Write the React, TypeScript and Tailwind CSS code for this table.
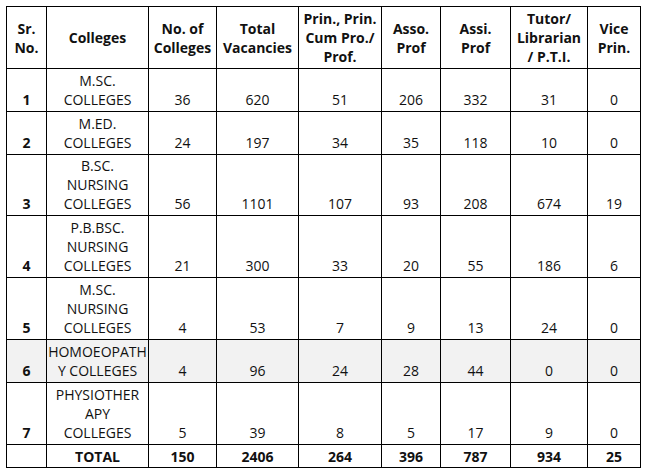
import React from "react";

const widths = [40, 102, 68, 82, 83, 59, 70, 77, 53];

const header: string[][] = [
  ["Sr.", "No."],
  ["Colleges"],
  ["No. of", "Colleges"],
  ["Total", "Vacancies"],
  ["Prin., Prin.", "Cum Pro./", "Prof."],
  ["Asso.", "Prof"],
  ["Assi.", "Prof"],
  ["Tutor/", "Librarian", "/ P.T.I."],
  ["Vice", "Prin."],
];

type Row = { sr: string; name: string[]; vals: string[]; h: number; gray?: boolean };

const rows: Row[] = [
  { sr: "1", name: ["M.SC.", "COLLEGES"], vals: ["36", "620", "51", "206", "332", "31", "0"], h: 43 },
  { sr: "2", name: ["M.ED.", "COLLEGES"], vals: ["24", "197", "34", "35", "118", "10", "0"], h: 43 },
  { sr: "3", name: ["B.SC.", "NURSING", "COLLEGES"], vals: ["56", "1101", "107", "93", "208", "674", "19"], h: 61 },
  { sr: "4", name: ["P.B.BSC.", "NURSING", "COLLEGES"], vals: ["21", "300", "33", "20", "55", "186", "6"], h: 62 },
  { sr: "5", name: ["M.SC.", "NURSING", "COLLEGES"], vals: ["4", "53", "7", "9", "13", "24", "0"], h: 62 },
  { sr: "6", name: ["HOMOEOPATH", "Y COLLEGES"], vals: ["4", "96", "24", "28", "44", "0", "0"], h: 43, gray: true },
  { sr: "7", name: ["PHYSIOTHER", "APY", "COLLEGES"], vals: ["5", "39", "8", "5", "17", "9", "0"], h: 62 },
];

const totals = ["150", "2406", "264", "396", "787", "934", "25"];

function Lines({ lines }: { lines: string[] }) {
  return (
    <>
      {lines.map((l, i) => (
        <div key={i}>{l}</div>
      ))}
    </>
  );
}

export default function App() {
  return (
    <div
      className="w-[648px] h-[472px] bg-white pt-[6px] pl-[6px] text-[14px] leading-[19px] text-[#111]"
      style={{ fontFamily: '"Open Sans", "Noto Sans", sans-serif' }}
    >
      <table className="border-collapse table-fixed w-[634px] border border-black">
        <colgroup>
          {widths.map((w, i) => (
            <col key={i} style={{ width: w }} />
          ))}
        </colgroup>
        <thead>
          <tr className="h-[62px]">
            {header.map((h, i) => (
              <th key={i} className="border border-black font-bold text-center align-middle px-0 py-0">
                <Lines lines={h} />
              </th>
            ))}
          </tr>
        </thead>
        <tbody>
          {rows.map((r, ri) => (
            <tr key={ri} style={{ height: r.h }} className={r.gray ? "bg-[#f2f2f2]" : "bg-white"}>
              <td className="border border-black text-center align-bottom font-bold pb-[2px]">{r.sr}</td>
              <td className="border border-black text-center align-bottom pb-[2px] whitespace-nowrap">
                <Lines lines={r.name} />
              </td>
              {r.vals.map((v, vi) => (
                <td key={vi} className="border border-black text-center align-bottom pb-[2px]">
                  {v}
                </td>
              ))}
            </tr>
          ))}
          <tr className="h-[23px] font-bold">
            <td className="border border-black"></td>
            <td className="border border-black text-center align-middle">TOTAL</td>
            {totals.map((t, ti) => (
              <td key={ti} className="border border-black text-center align-middle">
                {t}
              </td>
            ))}
          </tr>
        </tbody>
      </table>
    </div>
  );
}
